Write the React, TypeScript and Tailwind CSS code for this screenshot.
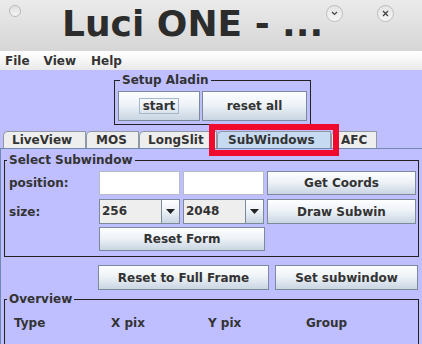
import React from "react";

const btn =
  "border border-[#7a8a99] bg-[linear-gradient(180deg,#fdfeff_0%,#eef3f8_45%,#c9d5e2_100%)] flex items-center justify-center text-[12px] font-bold text-[#333] leading-[14px]";

function Combo({ value }: { value: string }) {
  return (
    <div className="flex w-[81px] h-[25px] border border-[#7a8a99]">
      <div className="flex-1 bg-[#eeeeee] text-[12px] font-bold text-[#333] leading-[23px] pl-[2px]">
        {value}
      </div>
      <div className="w-[18px] border-l border-[#7a8a99] bg-[linear-gradient(180deg,#fdfeff_0%,#eef3f8_45%,#c9d5e2_100%)] flex items-center justify-center">
        <svg width="9" height="5" viewBox="0 0 9 5">
          <path d="M0 0 H9 L4.5 5 Z" fill="#222" />
        </svg>
      </div>
    </div>
  );
}

function Tab({
  label,
  w,
  pl,
  selected,
}: {
  label: string;
  w: number;
  pl: number;
  selected?: boolean;
}) {
  return (
    <div
      className={
        "h-[17px] border border-b-0 border-[#8e99a4] rounded-tl-[5px] text-[12px] font-bold text-[#333] leading-[16px] " +
        (selected ? "bg-[#c6dbf1]" : "bg-[#eeeeee]")
      }
      style={{ width: w, paddingLeft: pl }}
    >
      {label}
    </div>
  );
}

export default function App() {
  return (
    <div className="w-[422px] h-[344px] overflow-hidden relative font-['DejaVu_Sans',sans-serif] bg-[#bfbfff]">
      {/* title bar */}
      <div className="h-[51px] flex items-start bg-[linear-gradient(180deg,#ebebeb_0%,#dedede_60%,#d6d6d6_100%)]">
        <div className="ml-[9px] mt-[5px] w-[12px] h-[12px] rounded-full border border-[#b9b9b9] bg-[linear-gradient(180deg,#e0e0e0,#f4f4f4)]" />
        <div className="ml-[41px] mt-[6px] text-[36px] leading-[36px] font-bold text-[#2c2c2c] whitespace-nowrap">
          Luci ONE - ...
        </div>
        <div className="ml-[3px] mt-[5px] w-[17px] h-[17px] rounded-full border border-[#bdbdbd] bg-[linear-gradient(180deg,#e4e4e4,#f6f6f6)] flex items-center justify-center">
          <svg width="7" height="5" viewBox="0 0 7 5">
            <path d="M1 1 L3.5 3.5 L6 1" stroke="#444" strokeWidth="1.2" fill="none" />
          </svg>
        </div>
        <div className="ml-[34px] mt-[5px] w-[17px] h-[17px] rounded-full border border-[#bdbdbd] bg-[linear-gradient(180deg,#e4e4e4,#f6f6f6)] flex items-center justify-center">
          <svg width="7" height="7" viewBox="0 0 7 7">
            <path d="M1 1 L6 6 M6 1 L1 6" stroke="#444" strokeWidth="1.3" />
          </svg>
        </div>
      </div>

      {/* menu bar */}
      <div className="h-[19px] flex items-center bg-[linear-gradient(180deg,#ffffff_0%,#f6f6f6_50%,#e8e8e8_100%)] text-[12px] font-bold text-[#333]">
        <span className="ml-[5px]">File</span>
        <span className="ml-[14px]">View</span>
        <span className="ml-[15px]">Help</span>
      </div>

      {/* content */}
      <div className="flex flex-col">
        <fieldset className="m-0 p-0 ml-[114px] mt-[3px] w-[196px] border border-[#222] px-[3px] pb-[3px]">
          <legend className="ml-[2px] px-[2px] text-[12px] leading-[14px] font-bold text-[#333]">
            Setup Aladin
          </legend>
          <div className="flex gap-[2px] mt-[4px]">
            <div className={btn + " w-[82px] h-[30px]"}>
              <span className="border border-[#a3b8cc] px-[3px] leading-[14px]">start</span>
            </div>
            <div className={btn + " w-[105px] h-[30px]"}>reset all</div>
          </div>
        </fieldset>

        {/* tabs */}
        <div className="flex mt-[6px] pl-[3px] h-[17px] items-end">
          <Tab label="LiveView" w={83} pl={8} />
          <Tab label="MOS" w={53} pl={9} />
          <Tab label="LongSlit" w={78} pl={8} />
          <Tab label="SubWindows" w={114} pl={10} selected />
          <Tab label="AFC" w={46} pl={9} />
        </div>

        <div className="border-t border-l border-[#7088b0] flex flex-col pl-[3px]">
          <fieldset className="m-0 p-0 mt-[4px] w-[415px] border border-[#222] pb-[5px]">
            <legend className="ml-[2px] px-[2px] text-[12px] leading-[14px] font-bold text-[#333]">
              Select Subwindow
            </legend>
            <div className="flex flex-col text-[12px] font-bold text-[#333]">
              <div className="flex items-center mt-[4px] h-[24px]">
                <div className="w-[94px] pl-[4px]">position:</div>
                <div className="w-[81px] h-[24px] bg-white border border-[#b4bcc5]" />
                <div className="ml-[3px] w-[81px] h-[24px] bg-white border border-[#b4bcc5]" />
                <div className={btn + " ml-[3px] w-[149px] h-[24px]"}>Get Coords</div>
              </div>
              <div className="flex items-center mt-[4px] h-[25px]">
                <div className="w-[94px] pl-[4px]">size:</div>
                <Combo value="256" />
                <div className="ml-[3px]">
                  <Combo value="2048" />
                </div>
                <div className={btn + " ml-[3px] w-[149px] h-[25px]"}>Draw Subwin</div>
              </div>
              <div className="flex items-center mt-[3px] h-[24px]">
                <div className="w-[94px]" />
                <div className={btn + " w-[166px] h-[24px]"}>Reset Form</div>
              </div>
            </div>
          </fieldset>

          <div className="flex mt-[8px] ml-[94px] gap-[6px]">
            <div className={btn + " w-[171px] h-[25px]"}>Reset to Full Frame</div>
            <div className={btn + " w-[143px] h-[25px]"}>Set subwindow</div>
          </div>

          <fieldset className="m-0 p-0 mt-[2px] w-[415px] h-[80px] border border-[#222]">
            <legend className="ml-[2px] px-[2px] text-[12px] leading-[14px] font-bold text-[#333]">
              Overview
            </legend>
            <div className="flex mt-[10px] pl-[9px] text-[12px] leading-[14px] font-bold text-[#333]">
              <div className="w-[97px]">Type</div>
              <div className="w-[97px]">X pix</div>
              <div className="w-[98px]">Y pix</div>
              <div>Group</div>
            </div>
          </fieldset>
        </div>
      </div>

      {/* red highlight */}
      <div className="absolute left-[209px] top-[124px] w-[130px] h-[32px] border-[6px] border-[#f00a2e]" />
    </div>
  );
}
